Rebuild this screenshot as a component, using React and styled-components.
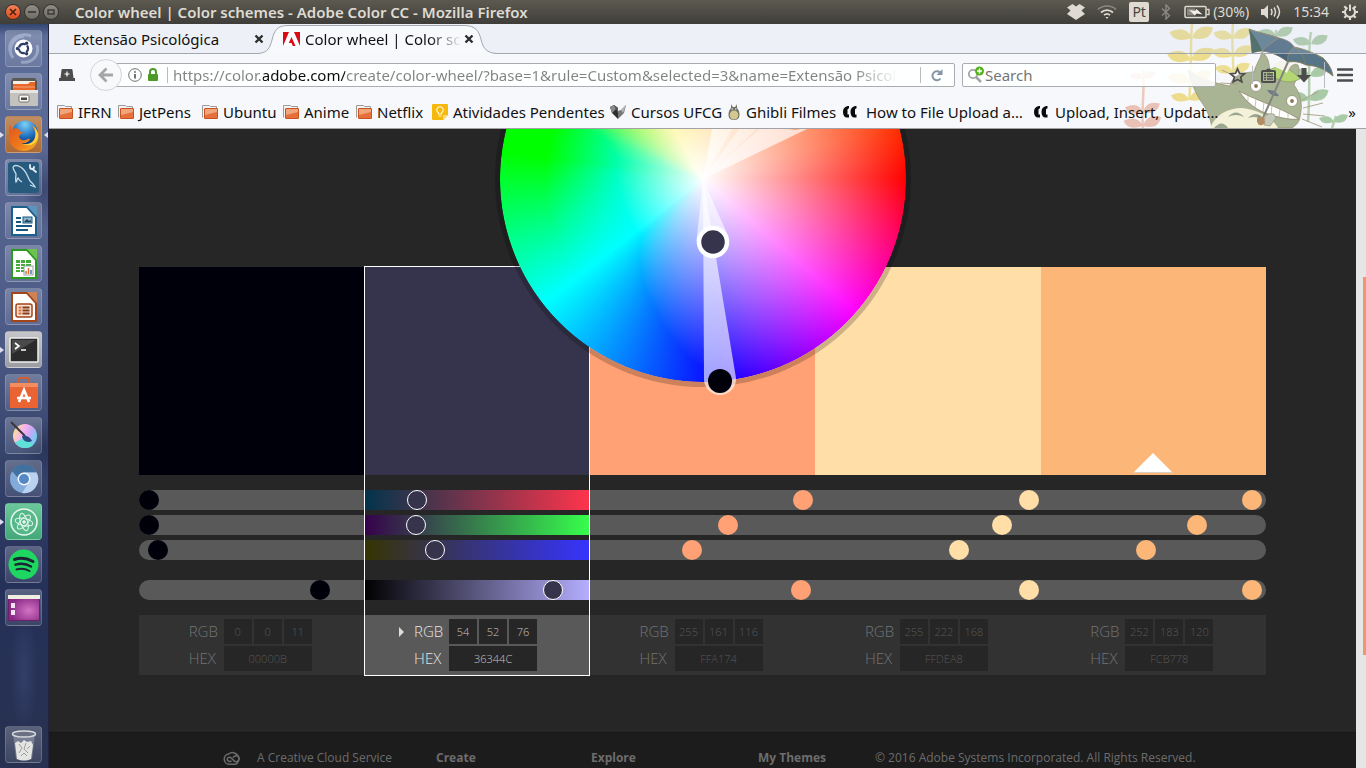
import React, { useLayoutEffect, useRef } from "react";
import styled, { createGlobalStyle, css } from "styled-components";

const chromeFont = '"Noto Sans", "Open Sans", sans-serif';
const pageFont = '"Open Sans", "Noto Sans", sans-serif';

const GlobalStyle = createGlobalStyle`
  * { box-sizing: border-box; }
  html, body { margin: 0; background: #262626; }
  body { font-family: ${chromeFont}; font-size: 15px; overflow: hidden; }
  button, input { font-family: inherit; }
  button { border: 0; padding: 0; background: none; cursor: pointer; }
  svg { display: block; flex: none; }
`;

/* ---------- desktop shell ---------- */

const Desktop = styled.div`
  display: flex;
  flex-direction: column;
  min-height: 100vh;
`;

const TitleBar = styled.header`
  display: flex;
  align-items: center;
  height: 24px;
  padding: 0 7px 0 5px;
  background: linear-gradient(#5c5a50, #3e3d39);
  color: #dfdbd2;
`;

const WindowButtons = styled.div`
  display: flex;
  gap: 3px;
  margin-right: 16px;
`;

const WindowButton = styled.button`
  display: grid;
  place-items: center;
  width: 16px;
  height: 16px;
  border-radius: 50%;
  border: 1px solid #33322e;
  background: ${(p) => (p.$close ? "linear-gradient(#f58259, #df4a1b)" : "linear-gradient(#8f8d84, #6e6c65)")};
`;

const WindowTitle = styled.h1`
  flex: 1;
  margin: 0;
  font-size: 15px;
  font-weight: 600;
  line-height: 24px;
  white-space: nowrap;
`;

const Indicators = styled.div`
  display: flex;
  align-items: center;
  gap: 12px;
  font-size: 14px;
  line-height: 24px;
`;

const IndicatorGroup = styled.div`
  display: flex;
  align-items: center;
  gap: 3px;
`;

const Layout = styled.span`
  width: 20px;
  height: 20px;
  border-radius: 2px;
  background: #dfdbd2;
  color: #45443f;
  font-size: 14px;
  line-height: 20px;
  text-align: center;
`;

const Workspace = styled.div`
  display: flex;
  flex: 1;
`;

const Launcher = styled.nav`
  display: flex;
  flex-direction: column;
  align-items: center;
  gap: 6px;
  width: 49px;
  padding: 6px 1px 5px 0;
  border-right: 1px solid #20233a;
  background:
    radial-gradient(ellipse 22px 40px at 44px 165px, #2f3a63aa, transparent),
    radial-gradient(ellipse 24px 30px at 44px 425px, #232c50aa, transparent),
    radial-gradient(ellipse 14px 60px at 24px 650px, #3d4c7a88, transparent),
    linear-gradient(#33466f 0, #5c6c98 12px, #5a6994 110px, #4c5a86 320px, #36446c 430px, #26315a 560px, #283150 100%);
`;

const Tile = styled.button`
  position: relative;
  display: grid;
  place-items: center;
  width: 37px;
  height: 37px;
  border-radius: 4px;
  border: 1px solid rgba(255, 255, 255, 0.16);
  background: ${(p) => p.$tint || "linear-gradient(rgba(255,255,255,.24), rgba(255,255,255,.1))"};
  ${(p) => p.$last && css`margin-top: auto;`}
`;

const RunningMark = styled.span`
  position: absolute;
  top: 15px;
  ${(p) => (p.$right ? "right: -7px; border-right: 4px solid #dde;" : "left: -6px; border-left: 4px solid #dde;")}
  border-top: 3px solid transparent;
  border-bottom: 3px solid transparent;
`;

/* ---------- browser chrome ---------- */

const Browser = styled.main`
  display: flex;
  flex-direction: column;
  flex: 1;
  min-width: 0;
`;

const Chrome = styled.div`
  position: relative;
  background: #f7f8fc;
  border-bottom: 1px solid #a2a2a6;
  color: #111;
`;

const Persona = styled.svg`
  position: absolute;
  top: 0;
  right: 0;
`;

const TabStrip = styled.div`
  position: relative;
  display: flex;
  height: 30px;
  background: rgba(205, 212, 228, 0.2);
  border-bottom: 1px solid #a3a8af;
`;

const Tab = styled.div`
  position: relative;
  display: flex;
  align-items: center;
  width: ${(p) => p.$width}px;
  height: 30px;
  padding: ${(p) => p.$pad};
  margin-left: ${(p) => (p.$active ? -6 : 0)}px;
  line-height: 30px;
`;

const TabShape = styled.svg`
  position: absolute;
  inset: 0;
  width: 100%;
  height: 30px;
`;

const TabTitle = styled.span`
  position: relative;
  flex: 1;
  min-width: 0;
  margin-left: ${(p) => (p.$icon ? 5 : 0)}px;
  white-space: nowrap;
  ${(p) => p.$icon && css`mask-image: linear-gradient(to right, #000 124px, transparent 157px);`}
`;

const TabClose = styled.button`
  position: relative;
  width: 10px;
  height: 10px;
`;

const NavBar = styled.div`
  position: relative;
  display: flex;
  align-items: center;
  height: 42px;
  padding: 0 11px 0 10px;
`;

const BackButton = styled.button`
  position: relative;
  z-index: 1;
  display: grid;
  place-items: center;
  flex: none;
  width: 32px;
  height: 32px;
  margin-left: 15px;
  border: 1px solid #d3d5d9;
  border-radius: 50%;
  background: #f8f9fb;
`;

const Field = styled.label`
  display: flex;
  align-items: center;
  height: 24px;
  border: 1px solid #a9acb1;
  border-radius: 2px;
  background: rgba(255, 255, 255, 0.88);
`;

const AddressField = styled(Field)`
  flex: 1;
  margin-left: -8px;
  padding: 0 7px 0 13px;
`;

const SearchField = styled(Field)`
  width: 254px;
  margin-left: 7px;
  padding-left: 4px;
`;

const FieldRule = styled.span`
  width: 1px;
  height: ${(p) => p.$tall || 16}px;
  margin: 0 ${(p) => p.$gap}px;
  background: #b9bbc0;
`;

const AddressInput = styled.input`
  flex: 1;
  min-width: 0;
  height: 22px;
  padding: 0;
  border: 0;
  outline: 0;
  font-size: 15px;
  color: transparent;
  background: linear-gradient(to right, #828282 90px, #0c0c0c 90px, #0c0c0c 172px, #828282 172px, #828282 calc(100% - 60px), transparent calc(100% - 16px));
  background-clip: text;
  -webkit-background-clip: text;
`;

const SearchInput = styled.input`
  flex: 1;
  min-width: 0;
  height: 22px;
  padding: 0;
  border: 0;
  outline: 0;
  background: none;
  font-size: 15px;
  &::placeholder { color: #757575; opacity: 1; }
`;

const ToolButton = styled.button`
  display: grid;
  place-items: center;
  width: 20px;
  height: 24px;
  margin-left: ${(p) => p.$gap || 0}px;
`;

const Bookmarks = styled.nav`
  position: relative;
  display: flex;
  align-items: center;
  height: 32px;
  padding: 0 10px 0 8px;
`;

const Bookmark = styled.a`
  display: flex;
  align-items: center;
  gap: ${(p) => p.$gap || 5}px;
  width: ${(p) => p.$width}px;
  color: #111;
  text-decoration: none;
  white-space: nowrap;
  line-height: 20px;
`;

const More = styled.button`
  margin-left: auto;
  font-size: 15px;
  line-height: 20px;
  color: #111;
`;

/* ---------- page ---------- */

const PageArea = styled.div`
  display: flex;
  flex: 1;
`;

const Page = styled.div`
  position: relative;
  display: flex;
  flex-direction: column;
  flex: 1;
  min-width: 0;
  overflow: hidden;
  background: #262626;
  font-family: ${pageFont};
`;

const ScrollTrack = styled.div`
  display: flex;
  justify-content: flex-end;
  width: 10px;
  padding-top: 148px;
  background: #e6e6e6;
`;

const ScrollThumb = styled.div`
  width: 3px;
  height: 378px;
  background: #f2956d;
`;

const WheelBox = styled.div`
  position: absolute;
  z-index: 2;
  top: -158px;
  left: 50%;
  width: 416px;
  height: 430px;
  margin-left: -208px;
`;

const WheelDisc = styled.canvas`
  display: block;
  width: 416px;
  height: 416px;
  border: 5px solid rgba(0, 0, 0, 0.2);
  border-radius: 50%;
`;

const WheelMarks = styled.svg`
  position: absolute;
  inset: 0;
`;

const Palette = styled.section`
  display: flex;
  margin: 138px 90px 57px;
`;

const Column = styled.div`
  position: relative;
  flex: 1;
  min-width: 0;
  ${(p) =>
    p.$selected &&
    css`
      &::after {
        content: "";
        position: absolute;
        inset: -1px 0;
        border: 1px solid #fff;
        pointer-events: none;
      }
    `}
`;

const Swatch = styled.div`
  display: flex;
  justify-content: center;
  align-items: flex-end;
  height: 208px;
  padding-bottom: 2px;
  background: ${(p) => p.$color};
`;

const Sliders = styled.div`
  display: flex;
  flex-direction: column;
  gap: 5px;
  padding: 15px 0;
`;

const Track = styled.div`
  height: 20px;
  margin-top: ${(p) => (p.$apart ? 15 : 0)}px;
  padding-right: 2px;
  background: ${(p) => p.$fill || "#595959"};
  border-radius: ${(p) => (p.$end === "first" ? "10px 0 0 10px" : p.$end === "last" ? "0 10px 10px 0" : "0")};
`;

const Range = styled.input`
  appearance: none;
  display: block;
  width: 100%;
  height: 20px;
  margin: 0;
  background: none;
  &::-webkit-slider-thumb {
    appearance: none;
    box-sizing: border-box;
    width: 20px;
    height: 20px;
    border: ${(p) => (p.$selected ? "1px solid #fff" : "0")};
    border-radius: 50%;
    background: ${(p) => p.$color};
  }
`;

const Values = styled.div`
  display: grid;
  grid-template-columns: 35px 88px;
  grid-auto-rows: 25px;
  row-gap: 2px;
  justify-content: center;
  align-items: center;
  height: 60px;
  padding: 4px 3px 4px 0;
  background: ${(p) => (p.$selected ? "#595959" : "#323232")};
  color: ${(p) => (p.$selected ? "#e4e4e4" : "#747474")};
`;

const ModeLabel = styled.span`
  position: relative;
  font-size: 15px;
  font-weight: 300;
  line-height: 25px;
`;

const ModeArrow = styled.span`
  position: absolute;
  left: -15px;
  top: 8px;
  border-left: 5px solid #dedede;
  border-top: 5px solid transparent;
  border-bottom: 5px solid transparent;
`;

const ValueRow = styled.div`
  display: flex;
  gap: 2px;
`;

const ValueInput = styled.input`
  flex: 1;
  width: 0;
  height: 25px;
  padding: 0;
  border: 0;
  background: #262626;
  color: ${(p) => (p.$selected ? "#c4c4c4" : "#585858")};
  font-size: 11px;
  font-weight: 300;
  text-align: center;
`;

const Footer = styled.footer`
  display: flex;
  flex: 1;
  align-items: flex-start;
  padding: 15px 0 0 174px;
  border-top: 1px solid #171717;
  background: #1c1c1c;
  color: #6c6c6c;
  font-size: 12px;
  line-height: 20px;
  white-space: nowrap;
`;

const FooterCell = styled.div`
  display: flex;
  align-items: center;
  gap: 14px;
  width: ${(p) => p.$width}px;
`;

const FooterLink = styled.a`
  color: inherit;
  font-weight: 700;
  text-decoration: none;
`;

/* ---------- launcher icons ---------- */

const DocIcon = ({ color, fold, children }) => (
  <svg width="28" height="32" viewBox="0 0 28 32">
    <path d="M2 2h15l9 10v18H2z" fill="#fff" stroke={color} strokeWidth="2" />
    <path d="M17 1h10v11z" fill={fold} />
    {children}
  </svg>
);

const launcherApps = [
  {
    name: "Dash",
    icon: (
      <svg width="35" height="35" viewBox="0 0 35 35">
        <path d="M4 20C2 8 14 1 25 5M31 14c3 10-5 19-16 17M7 27C0 17 8 6 18 5" fill="none" stroke="#c9d2ea" strokeOpacity=".45" strokeWidth="3" />
        <circle cx="17.500" cy="17.500" r="9" fill="#fff" />
        <circle cx="17.500" cy="17.500" r="4.600" fill="none" stroke="#2f3d66" strokeWidth="2.200" strokeDasharray="8.200 1.430" strokeDashoffset="4" />
        <circle cx="11.500" cy="17.500" r="1.700" fill="#2f3d66" />
        <circle cx="20.600" cy="12.300" r="1.700" fill="#2f3d66" />
        <circle cx="20.600" cy="22.700" r="1.700" fill="#2f3d66" />
      </svg>
    ),
  },
  {
    name: "Files",
    icon: (
      <svg width="30" height="31" viewBox="0 0 30 31">
        <path d="M4 2h22l2 3v10H2V5z" fill="#5b5954" />
        <path d="M4 5h22v8H4z" fill="#f3efe8" />
        <path d="M4 8h15l2-2h5v8H4z" fill="#e8672a" />
        <path d="M4 11h22" stroke="#f7a77b" />
        <path d="M1 14h28v15q0 1-1 1H2q-1 0-1-1z" fill="#c4c2be" />
        <path d="M1 14h28v3H1z" fill="#e8e6e3" />
        <rect x="10" y="19" width="10" height="7" rx="1.500" fill="#f7f7f7" stroke="#77746f" />
        <rect x="12" y="21.500" width="6" height="2.500" fill="#4a4844" />
      </svg>
    ),
  },
  {
    name: "Firefox",
    tint: "linear-gradient(#c08d62, #ad6a35)",
    left: true,
    right: true,
    icon: (
      <svg width="32" height="32" viewBox="0 0 32 32">
        <defs>
          <radialGradient id="ffGlobe" cx=".5" cy=".15" r=".8">
            <stop offset="0" stopColor="#7fd0f5" />
            <stop offset=".6" stopColor="#1f6fc0" />
            <stop offset="1" stopColor="#0d2f6e" />
          </radialGradient>
          <linearGradient id="ffFox" x1="0" y1="0" x2="1" y2="1">
            <stop offset="0" stopColor="#e2541b" />
            <stop offset=".55" stopColor="#ee7a1b" />
            <stop offset="1" stopColor="#f9b52a" />
          </linearGradient>
        </defs>
        <circle cx="17" cy="14.500" r="13" fill="url(#ffGlobe)" />
        <path d="M3 6c0 3 0 4 1 5 2-2 4-2 7-1-1 2 1 3 4 3-1 2-3 2-4 4 0 3 3 5 6 4 2 0 3-2 5-1-1 3-5 5-9 4 5 3 13 1 14-6 1-5-1-9-4-12 5 3 8 8 7 14-1 7-7 12-14 12C8 32 1 26 1 18 1 13 1 9 3 6z" fill="url(#ffFox)" />
        <path d="M24 6c4 4 5 10 2 15-3 4-8 5-12 4 6 3 14 1 16-6 1-5-1-9-6-13z" fill="#fbd33a" />
      </svg>
    ),
  },
  {
    name: "MySQL Workbench",
    icon: (
      <svg width="31" height="31" viewBox="0 0 31 31">
        <rect width="31" height="31" rx="3" fill="#285a7e" />
        <path d="M5 5c2-3 8-1 11 3 3 3 4 8 6 11 2 2 4 3 5 6l-5-2M5 5c0 3 2 4 3 7 0 3-1 5 0 8 1-1 1-3 2-4 1 2 2 3 4 4" fill="none" stroke="#c8dce9" strokeWidth="1.300" />
        <path d="M22 3v2q0 2 2 2t2-2M24.500 7l3.500 3" fill="none" stroke="#e6eef4" strokeWidth="1.800" strokeLinecap="round" />
      </svg>
    ),
  },
  {
    name: "Writer",
    icon: (
      <DocIcon color="#1b5f8c" fold="#5c93bb">
        <path d="M6 13h5M6 17h5M6 21h16M6 25h12" stroke="#175781" strokeWidth="2" />
        <rect x="13" y="12" width="9" height="6" fill="#8cb5d0" stroke="#175781" />
        <path d="M14 17l3-3 2 2 2-1v2z" fill="#21425a" />
      </DocIcon>
    ),
  },
  {
    name: "Calc",
    icon: (
      <DocIcon color="#2b9a1f" fold="#6fc14f">
        <path d="M6 12h15v12H6z" fill="#45ab37" />
        <path d="M6 15.500h15M6 18.500h15M6 21.500h15M10.500 12v12M15.500 12v12" stroke="#fff" />
        <rect x="14" y="18" width="9" height="9" fill="#fff" stroke="#98a2a8" />
        <path d="M16 26v-3M18.500 26v-6" stroke="#e06c2f" strokeWidth="1.500" />
        <path d="M21 26v-4" stroke="#3d7ab5" strokeWidth="1.500" />
      </DocIcon>
    ),
  },
  {
    name: "Impress",
    icon: (
      <DocIcon color="#a2461a" fold="#cf8256">
        <rect x="6" y="13" width="16" height="13" rx="2" fill="#f6e2d6" stroke="#a2461a" strokeWidth="1.500" />
        <path d="M8.500 16.500h3M8.500 19.500h3M8.500 22.500h3" stroke="#e1702f" strokeWidth="2" />
        <path d="M12.500 16.500h7M12.500 19.500h7M12.500 22.500h7" stroke="#893a13" strokeWidth="2" />
      </DocIcon>
    ),
  },
  {
    name: "Terminal",
    tint: "linear-gradient(#c4c6cc, #9b9da3)",
    left: true,
    icon: (
      <svg width="30" height="26" viewBox="0 0 30 26">
        <rect x="1" y="1" width="28" height="24" rx="1" fill="#2b2b2b" stroke="#efefef" strokeWidth="1.500" />
        <path d="M3 3h24L3 17z" fill="#4a4a4a" />
        <path d="M6 6l4 3-4 3M12 13h5" fill="none" stroke="#fff" strokeWidth="1.600" />
      </svg>
    ),
  },
  {
    name: "Software",
    icon: (
      <svg width="30" height="32" viewBox="0 0 30 32">
        <path d="M10 8V3q0-2 2-2h6q2 0 2 2v5" fill="none" stroke="#d65a2d" strokeWidth="2" />
        <path d="M1 6h28v25H1z" fill="#ea6433" />
        <path d="M1 6h28v4H1z" fill="#f58d62" />
        <path d="M10 25l5-12 5 12M8 21h14" fill="none" stroke="#fff" strokeWidth="2.600" />
      </svg>
    ),
  },
  {
    name: "Krita",
    icon: (
      <svg width="34" height="33" viewBox="0 0 34 33">
        <defs>
          <linearGradient id="kr" x1="0" y1=".3" x2="1" y2=".7">
            <stop offset="0" stopColor="#f7e38a" />
            <stop offset=".35" stopColor="#f9b4ee" />
            <stop offset=".65" stopColor="#c9a8f6" />
            <stop offset="1" stopColor="#58d6f0" />
          </linearGradient>
        </defs>
        <circle cx="18" cy="17" r="12" fill="url(#kr)" />
        <path d="M8 23.500a12 12 0 0018.500 2.200L18 18z" fill="#5fe0d8" />
        <path d="M4 3l14 14" stroke="#38353d" strokeWidth="2" />
        <path d="M15 17c3-1 8 0 10 5-4 2-9 1-10-5z" fill="#294b86" />
      </svg>
    ),
  },
  {
    name: "Chromium",
    icon: (
      <svg width="30" height="30" viewBox="0 0 30 30">
        <circle cx="15" cy="15" r="14" fill="#82abdc" />
        <path d="M3 7a14 14 0 0124.500 1.500H15a7 7 0 00-6.500 5z" fill="#41719f" />
        <path d="M27.500 8.500A14 14 0 0113 29l7-11c1-4-1-8-5-9.500z" fill="#b8d2f0" />
        <circle cx="15" cy="15" r="6.500" fill="#f2f6fb" />
        <circle cx="15" cy="15" r="5" fill="#5588c4" />
      </svg>
    ),
  },
  {
    name: "Atom",
    tint: "linear-gradient(#6cc79b, #43a878)",
    left: true,
    icon: (
      <svg width="30" height="30" viewBox="0 0 30 30" fill="none" stroke="#e4f7ed">
        <circle cx="15" cy="15" r="13" strokeWidth="1.600" fill="#56b889" />
        <ellipse cx="15" cy="15" rx="9" ry="3.500" transform="rotate(12 15 15)" />
        <ellipse cx="15" cy="15" rx="9" ry="3.500" transform="rotate(72 15 15)" />
        <ellipse cx="15" cy="15" rx="9" ry="3.500" transform="rotate(132 15 15)" />
        <circle cx="15" cy="15" r="1.300" fill="#e4f7ed" />
      </svg>
    ),
  },
  {
    name: "Spotify",
    icon: (
      <svg width="31" height="31" viewBox="0 0 31 31" fill="none" stroke="#1c2433" strokeLinecap="round">
        <circle cx="15.500" cy="15.500" r="15" fill="#1ed760" stroke="none" />
        <path d="M6.500 10.500c6-2 13-1 18.500 2" strokeWidth="3" />
        <path d="M7.500 15.700c5-1.500 11-1 15.500 1.800" strokeWidth="2.400" />
        <path d="M8.500 20.400c4-1.200 9-.8 13 1.600" strokeWidth="2" />
      </svg>
    ),
  },
  {
    name: "Display switcher",
    icon: (
      <svg width="32" height="26" viewBox="0 0 32 26">
        <defs>
          <radialGradient id="dsp" cx=".65" cy=".6" r=".6">
            <stop offset="0" stopColor="#d273c4" />
            <stop offset="1" stopColor="#8a2a86" />
          </radialGradient>
        </defs>
        <rect x=".5" y=".5" width="31" height="25" fill="url(#dsp)" stroke="#6b1f69" />
        <path d="M0 0h32v4H0z" fill="#f0eee0" />
        <path d="M3 8h4v5H3zM3 15h4v5H3z" fill="#f2e4f2" />
      </svg>
    ),
  },
];

const TrashIcon = () => (
  <svg width="26" height="32" viewBox="0 0 26 32">
    <path d="M2 5l3 25q8 3 16 0l3-25z" fill="#c8ccd4" fillOpacity=".35" />
    <path d="M4 14l3-2 3 2 3-3 3 2 4-1 2 4-2 14q-7 3-14 0z" fill="#e4e4e2" />
    <path d="M8 15l3 4-3 5M15 14l-2 6 4 4M19 17l-3 3M10 27l3-3 3 3" fill="none" stroke="#9d9d9d" />
    <ellipse cx="13" cy="5" rx="11.500" ry="3" fill="#6b7180" stroke="#d8dade" strokeWidth="1.500" />
  </svg>
);

/* ---------- small browser icons ---------- */

const FolderIcon = () => (
  <svg width="16" height="16" viewBox="0 0 16 16">
    <path d="M.5 13.500V1.500h7l1 1h6v2" fill="#f4f4f4" stroke="#9b9b9b" />
    <rect x="2.500" y="4.500" width="13" height="10" rx=".5" fill="#e5703c" stroke="#c9511f" />
    <path d="M3 5h12v3L3 11z" fill="#f0a67a" />
  </svg>
);

const KeepIcon = () => (
  <svg width="16" height="16" viewBox="0 0 16 16">
    <path d="M1 0h14q1 0 1 1v10l-5 5H1q-1 0-1-1V1q0-1 1-1z" fill="#f4b90a" />
    <path d="M11 16v-5h5z" fill="#fbdc7d" />
    <path d="M6.500 10V8.800a3.200 3.200 0 113 0V10zM6.500 12h3" fill="none" stroke="#fff3cf" strokeWidth="1.200" />
  </svg>
);

const WingIcon = () => (
  <svg width="16" height="16" viewBox="0 0 16 16">
    <path d="M0 3l4-2 4 3v11L2 9z" fill="#2f2f2f" />
    <path d="M0 3l4-2 2 4-4 4z" fill="#8a8a8a" />
    <path d="M4 1l4 3v5z" fill="#5a5a5a" />
    <path d="M8 7l3-1 5-5-2 8-6 6z" fill="#777" />
    <path d="M16 1l-5 5 2 3z" fill="#b5b5b5" />
  </svg>
);

const GhibliIcon = () => (
  <svg width="14" height="16" viewBox="0 0 14 16">
    <path d="M4.500 0l1.200 3h2.600l1.200-3 .7 4.300C11.800 6 12.500 8.500 12.500 11c0 3.300-2 5-5.500 5s-5.500-1.700-5.500-5c0-2.500.7-5 2.300-6.700z" fill="#6f7168" />
    <ellipse cx="7" cy="11" rx="4.300" ry="4.500" fill="#d3c88f" />
    <path d="M4.500 5h1.500M8 5h1.500" stroke="#fff" />
  </svg>
);

const QuoteIcon = () => (
  <svg width="16" height="12" viewBox="0 0 16 12">
    <path d="M7 0C3 0 1 2.500 1 6c0 3.500 1.500 5.500 4 5.500h2V8.500H5.500V4C5.500 3 6 2.500 7 2.500zM14.500 0c-4 0-6 2.500-6 6 0 3.500 1.500 5.500 4 5.500h2V8.500H13V4c0-1 .5-1.500 1.500-1.500z" fill="#0b0b0b" />
  </svg>
);

const AdobeIcon = () => (
  <svg width="17" height="14" viewBox="0 0 17 14">
    <path d="M0 0h17v14H0z" fill="#fff" />
    <path d="M0 0h6L0 14zM11 0h6v14zM8.500 5l4 9H9.800l-1.200-3H5.800z" fill="#d80b17" />
  </svg>
);

const FaviconSlot = styled.span`
  position: relative;
`;

const CloseGlyph = () => (
  <svg width="10" height="10" viewBox="0 0 10 10">
    <path d="M1.500 1.500l7 7M8.500 1.500l-7 7" stroke="#2e2e2e" strokeWidth="2.400" />
  </svg>
);

const CloudIcon = () => (
  <svg width="20" height="16" viewBox="0 0 20 16" fill="none" stroke="#6c6c6c" strokeWidth="1.500">
    <path d="M7 14.300A5.200 5.200 0 015.600 4 6.200 6.200 0 1113.500 13.800q-1 .5-2.500.5z" />
    <path d="M8.500 11c-2 1.200-4.300.2-4.300-1.700 0-2 2.600-2.800 4.300-1l2.600 2.600c1.800 1.700 5 .5 5-2.300S13 4.800 11 6.500L9.800 7.700" />
  </svg>
);

/* ---------- browser theme illustration ---------- */

const leafPair = (x, y, s, color) => (
  <g key={`${x}-${y}`} fill={color}>
    <path d={`M${x} ${y}q${-s * 0.4} ${-s * 0.9} ${-s * 1.5} ${-s * 0.4}q${s * 0.3} ${s * 0.8} ${s * 1.5} ${s * 0.4}z`} />
    <path d={`M${x} ${y}q${s * 0.3} ${-s} ${s * 1.4} ${-s * 0.7}q${-s * 0.2} ${s} ${-s * 1.4} ${s * 0.7}z`} />
  </g>
);

const ThemeArt = () => (
  <Persona width="246" height="104" viewBox="0 0 246 104" aria-hidden="true">
    <g fill="none" strokeWidth="2.500">
      <path d="M72 0c-2 20 0 50-3 76" stroke="#ecdf98" />
      <path d="M113 0c-2 20 1 30 0 50" stroke="#e8e1a0" />
      <path d="M23 46c2 20-2 40 0 58" stroke="#ebc9bd" />
      <path d="M156 6c0 12 2 14 4 24M191 8c-4 20 0 50-3 90M216 92l-4 12" stroke="#b5d0ae" />
    </g>
    {[[72, 14, 15], [71, 36, 16], [70, 58, 15], [69, 76, 12]].map(([x, y, s]) => leafPair(x, y, s, "#ecdc8c"))}
    {[[113, 14, 13], [113, 32, 14], [113, 48, 12]].map(([x, y, s]) => leafPair(x, y, s, "#ecdf93"))}
    {[[23, 54, 9], [23, 88, 12], [23, 102, 13]].map(([x, y, s]) => leafPair(x, y, s, "#e9c2b5"))}
    {[[156, 12, 12], [191, 20, 12], [190, 52, 13], [189, 76, 14], [214, 98, 10]].map(([x, y, s]) => leafPair(x, y, s, "#a9caa6"))}
    <path d="M68 46c4 3 6 2 8 6 10 3 20 8 34 10 2-10 12-14 24-14 2-8 6-12 8-20 7 5 7 13 8 18 4 1 9 3 14 6 4-8 10-14 14-11 3 8-2 14-4 20 7 9 9 20 6 32-1 6-4 8-8 11H92c-2-12-6-20-12-28-6-10-9-18-12-30z" fill="#a9b495" stroke="#968d6f" strokeWidth=".7" />
    <path d="M90 104c6-14 18-20 32-20 18 2 30 10 36 20z" fill="#f3f1d8" />
    <path d="M108 93q8-9 16 0-8-4-16 0zM128 94q9-9 17 2-9-5-17-2zM94 104q8-9 14 0z" fill="#9aa690" />
    <path d="M148 47c10-8 24-2 32 8-12 6-24 2-32-8z" fill="#b4d673" stroke="#7f9660" strokeWidth=".6" />
    <path d="M152 42c8-8 16-6 19-1l-4 8c-4-3-9-5-15-7z" fill="#f5f4ec" />
    <circle cx="136" cy="62" r="5.500" fill="#fff" stroke="#8d8466" strokeWidth=".7" />
    <circle cx="136" cy="62" r="1.900" fill="#8c7653" />
    <circle cx="172" cy="77" r="5.500" fill="#fff" stroke="#8d8466" strokeWidth=".7" />
    <circle cx="172" cy="77" r="1.900" fill="#8c7653" />
    <path d="M147 66q8-1 12 6-8 1-12-6z" fill="#6f7a8a" />
    <path d="M119 67c16 9 38 15 60 28-8 1-18-1-28-4-14-4-24-12-32-24z" fill="#fff" stroke="#8d8466" strokeWidth=".8" />
    <path d="M128 72v5M136 75l-1 9M144 78l-1 10M152 81l-1 10M160 85l-1 8M168 89v5" stroke="#b3ab8e" strokeWidth=".7" />
    <path d="M183 84l20-5M183 90l22 2M182 95l20 8M182 76l16-8M122 56l-20-10M118 60l-18-1" stroke="#a89d80" strokeWidth=".9" />
    <path d="M168 38l-26 58q-6 6-3-4" fill="none" stroke="#84847e" strokeWidth="2" />
    <path d="M129 5c10 4 20 5 30 9 8 2 12 4 15 9 10 2 18 5 29 11 5 5 9 11 10 18-10-8-16-10-27-11-6-3-10-4-18-3-8-6-16-10-26-11-4 0-7 1-10 2-1-9-1-16-3-24z" fill="#567688" stroke="#8c7d58" strokeWidth="1" />
    <path d="M129 5c6 8 10 14 13 22-4 0-7 1-10 2-1-9-1-16-3-24z" fill="#355a52" />
    <path d="M142 27c6-6 12-8 16-13 8 2 12 4 16 9-6 6-8 8-6 15-8-6-16-10-26-11z" fill="#42607a" opacity=".7" />
    <path d="M159 14c-6 4-12 7-17 13M174 23c-5 5-7 9-6 15M174 23c6 4 10 10 12 18" fill="none" stroke="#8c7d58" strokeWidth=".9" />
    <path d="M144 96q2-8 10-6l2 4-6 8-6-1z" fill="#c2c9ba" stroke="#968d6f" strokeWidth=".6" />
    <path d="M138 92q4 4 6 0l1 7q-4 4-7 1z" fill="#b08d63" />
  </Persona>
);

/* ---------- color wheel ---------- */

const wheelRadius = 203;

// Hue ring, clockwise degrees from three o'clock.
const hueStops = [
  [0, 255, 0, 0],
  [41, 255, 0, 255],
  [85, 10, 0, 255],
  [142, 0, 255, 255],
  [188, 0, 255, 0],
  [202, 0, 255, 0],
  [240, 255, 232, 0],
  [300, 255, 128, 0],
  [345, 255, 48, 0],
  [360, 255, 0, 0],
];

// Radius at which each direction becomes fully saturated.
const saturationStops = [
  [0, 203],
  [85, 203],
  [109, 142],
  [137, 84],
  [165, 84],
  [194, 88],
  [205, 113],
  [240, 203],
  [360, 203],
];

// Extra blue that turns the inner greens towards spring green.
const innerBlueStops = [
  [0, 0],
  [142, 0],
  [165, 260],
  [185, 490],
  [205, 500],
  [232, 0],
  [360, 0],
];

const sample = (stops, angle) => {
  let i = 1;
  while (stops[i][0] < angle) i += 1;
  const a = stops[i - 1];
  const b = stops[i];
  const t = (angle - a[0]) / (b[0] - a[0]);
  return a.slice(1).map((v, k) => v + (b[k + 1] - v) * t);
};

function ColorWheel() {
  const ref = useRef(null);
  useLayoutEffect(() => {
    const size = wheelRadius * 2;
    const ctx = ref.current.getContext("2d");
    const img = ctx.createImageData(size, size);
    for (let y = 0; y < size; y += 1) {
      for (let x = 0; x < size; x += 1) {
        const dx = x + 0.5 - wheelRadius;
        const dy = y + 0.5 - wheelRadius;
        const angle = ((Math.atan2(dy, dx) * 180) / Math.PI + 360) % 360;
        const hue = sample(hueStops, angle);
        const r = Math.hypot(dx, dy);
        const full = sample(saturationStops, angle)[0];
        const inner = Math.max(0, 0.78 - Math.max(r, full) / wheelRadius);
        hue[2] = Math.min(255, hue[2] + inner * sample(innerBlueStops, angle)[0]);
        const sat = Math.min(1, r / full);
        const at = (y * size + x) * 4;
        for (let k = 0; k < 3; k += 1) img.data[at + k] = 255 + (hue[k] - 255) * sat;
        img.data[at + 3] = 255 * Math.max(0, Math.min(1, wheelRadius - r + 0.5));
      }
    }
    ctx.putImageData(img, 0, 0);
  }, []);

  return (
    <WheelBox>
      <WheelDisc ref={ref} width={wheelRadius * 2} height={wheelRadius * 2} />
      <WheelMarks width="416" height="430" viewBox="0 0 416 430">
        <g fill="#fff">
          <path d="M208 208L217 158h20zM208 208L244 158h18z" opacity=".45" />
          <path d="M208 208L264 158h48z" opacity=".5" />
          <path d="M208 208L217 158h95z" opacity=".35" />
          <path d="M208 208L201.500 270l32-4z" opacity=".6" />
          <path d="M208 208l1 201a16 16 0 0032-2z" opacity=".62" />
        </g>
        <circle cx="300" cy="147" r="12" fill="#ffa174" />
        <circle cx="225" cy="410" r="12" fill="#00000b" />
        <circle cx="218" cy="271" r="14" fill="#36344c" stroke="#fff" strokeWidth="4.500" />
      </WheelMarks>
    </WheelBox>
  );
}

/* ---------- data ---------- */

const colors = [
  { hex: "00000B", rgb: [0, 0, 11], level: 84 },
  { hex: "36344C", rgb: [54, 52, 76], level: 88, selected: true },
  { hex: "FFA174", rgb: [255, 161, 116], level: 99 },
  { hex: "FFDEA8", rgb: [255, 222, 168], level: 100 },
  { hex: "FCB778", rgb: [252, 183, 120], level: 99, base: true },
];

const selectedFills = [
  "linear-gradient(to right, #00344c, #ff344c)",
  "linear-gradient(to right, #36004c, #36ff4c)",
  "linear-gradient(to right, #363400, #3634ff)",
  "linear-gradient(to right, #000, #b5aeff)",
];

const channels = ["Red", "Green", "Blue", "Brightness"];

const bookmarks = [
  { label: "IFRN", width: 61, icon: <FolderIcon /> },
  { label: "JetPens", width: 84, icon: <FolderIcon /> },
  { label: "Ubuntu", width: 81, icon: <FolderIcon /> },
  { label: "Anime", width: 73, icon: <FolderIcon /> },
  { label: "Netflix", width: 76, icon: <FolderIcon /> },
  { label: "Atividades Pendentes", width: 178, icon: <KeepIcon /> },
  { label: "Cursos UFCG", width: 117, icon: <WingIcon /> },
  { label: "Ghibli Filmes", width: 115, icon: <GhibliIcon /> },
  { label: "How to File Upload a…", width: 191, gap: 8, icon: <QuoteIcon /> },
  { label: "Upload, Insert, Updat…", width: 190, gap: 6, icon: <QuoteIcon /> },
];

function ColorColumn({ color, index }) {
  const { hex, rgb, level, selected, base } = color;
  const end = index === 0 ? "first" : index === colors.length - 1 ? "last" : undefined;
  const settings = [...rgb, level];
  return (
    <Column $selected={selected}>
      <Swatch $color={`#${hex}`}>
        {base && (
          <svg width="40" height="20" viewBox="0 0 40 20">
            <path d="M20 0l19.500 19.500H.5z" fill="#fff" />
            <path d="M0 19.500h40" stroke="#d8cfc5" />
          </svg>
        )}
      </Swatch>
      <Sliders>
        {channels.map((channel, i) => (
          <Track key={channel} $apart={i === 3} $end={end} $fill={selected && selectedFills[i]}>
            <Range
              type="range"
              min="0"
              max={i === 3 ? 100 : 255}
              defaultValue={settings[i]}
              aria-label={`${channel} of #${hex}`}
              $color={`#${hex}`}
              $selected={selected}
            />
          </Track>
        ))}
      </Sliders>
      <Values $selected={selected}>
        <ModeLabel>
          {selected && <ModeArrow />}
          RGB
        </ModeLabel>
        <ValueRow>
          {rgb.map((v, i) => (
            <ValueInput key={channels[i]} $selected={selected} defaultValue={v} aria-label={`${channels[i]} value`} />
          ))}
        </ValueRow>
        <ModeLabel as="label" htmlFor={`hex-${hex}`}>HEX</ModeLabel>
        <ValueRow>
          <ValueInput id={`hex-${hex}`} $selected={selected} defaultValue={hex} />
        </ValueRow>
      </Values>
    </Column>
  );
}

function SystemIndicators() {
  return (
    <Indicators>
      <svg width="18" height="16" viewBox="0 0 18 16" fill="#dfdbd2">
        <path d="M5.500 0L9 2.600 12.500 0 18 3.600l-3.600 3L18 10l-3.800 2.400L9 16l-5.200-3.600L0 10l3.600-3.400L0 3.600z" />
      </svg>
      <svg width="20" height="14" viewBox="0 0 20 14" fill="none" strokeWidth="1.700">
        <path d="M1 4.500C6-.2 14-.2 19 4.500" stroke="#8b8982" />
        <path d="M4 7.500c3.500-3.200 8.500-3.200 12 0M7 10.200c1.800-1.600 4.200-1.600 6 0" stroke="#dfdbd2" />
        <path d="M8.500 12l1.500 2 1.500-2z" fill="#dfdbd2" />
      </svg>
      <Layout>Pt</Layout>
      <svg width="11" height="16" viewBox="0 0 11 16" fill="none" stroke="#8b8982" strokeWidth="1.400">
        <path d="M1 4.500l7.500 7L5 15V1l3.500 3.500-7.500 7" />
      </svg>
      <IndicatorGroup>
        <svg width="26" height="14" viewBox="0 0 26 14">
          <rect x="1" y="1.500" width="21" height="11" rx="1" fill="none" stroke="#dfdbd2" strokeWidth="1.500" />
          <path d="M23 4.500h2v5h-2" fill="none" stroke="#dfdbd2" strokeWidth="1.300" />
          <path d="M3 3.500h8v7H3z" fill="#8b8982" />
          <path d="M5 5l6 1 1.500-2 6 5.500-6-1L11 10.500z" fill="#f3f0e8" />
        </svg>
        <span>(30%)</span>
      </IndicatorGroup>
      <svg width="20" height="16" viewBox="0 0 20 16" fill="none" stroke="#dfdbd2" strokeWidth="1.500">
        <path d="M0 5h3l4-4v14l-4-4H0z" fill="#dfdbd2" stroke="none" />
        <path d="M10 5q2 3 0 6M13 3.500q3 4.500 0 9M16 1.500q5 6.500 0 13" />
      </svg>
      <time>15:34</time>
      <svg width="18" height="18" viewBox="0 0 18 18" fill="none" stroke="#dfdbd2">
        <path d="M6.500 4.700a5 5 0 105 0" strokeWidth="2" />
        <path d="M9 1.500V8" strokeWidth="2" />
        <path d="M1 9h3M14 9h3M3.300 3.300l2 2M12.700 12.700l2 2M3.300 14.700l2-2M12.700 5.300l2-2M9 14v3" strokeWidth="2.200" />
      </svg>
    </Indicators>
  );
}

export default function App() {
  return (
    <Desktop>
      <GlobalStyle />
      <TitleBar>
        <WindowButtons>
          <WindowButton $close aria-label="Close window">
            <svg width="8" height="8" viewBox="0 0 8 8"><path d="M1 1l6 6M7 1L1 7" stroke="#4b2112" strokeWidth="1.600" /></svg>
          </WindowButton>
          <WindowButton aria-label="Minimize">
            <svg width="8" height="8" viewBox="0 0 8 8"><path d="M0 4h8" stroke="#33322e" strokeWidth="1.500" /></svg>
          </WindowButton>
          <WindowButton aria-label="Restore">
            <svg width="8" height="8" viewBox="0 0 8 8"><rect x="1" y="2" width="6" height="4" fill="none" stroke="#33322e" strokeWidth="1.300" /></svg>
          </WindowButton>
        </WindowButtons>
        <WindowTitle>Color wheel | Color schemes - Adobe Color CC - Mozilla Firefox</WindowTitle>
        <SystemIndicators />
      </TitleBar>

      <Workspace>
        <Launcher aria-label="Launcher">
          {launcherApps.map((app) => (
            <Tile key={app.name} $tint={app.tint} aria-label={app.name}>
              {app.left && <RunningMark />}
              {app.right && <RunningMark $right />}
              {app.icon}
            </Tile>
          ))}
          <Tile $last aria-label="Trash"><TrashIcon /></Tile>
        </Launcher>

        <Browser>
          <Chrome>
            <ThemeArt />
            <TabStrip>
              <Tab $width={215} $pad="0 0 0 24px">
                <TabTitle>Extensão Psicológica</TabTitle>
                <TabClose aria-label="Close tab"><CloseGlyph /></TabClose>
              </Tab>
              <Tab $active $width={240} $pad="0 24px 0 25px">
                <TabShape viewBox="0 0 240 30" preserveAspectRatio="none">
                  <path d="M0 29.500C10 29 12 23 14 16 16 7 19 1.500 30 1.500H206c12 0 15 6 17 14 2 8 5 14 17 14V30H0z" fill="#f8f9fc" />
                  <path d="M0 29.500C10 29 12 23 14 16 16 7 19 1.500 30 1.500H206c12 0 15 6 17 14 2 8 5 14 17 14" fill="none" stroke="#a3a8af" />
                </TabShape>
                <FaviconSlot><AdobeIcon /></FaviconSlot>
                <TabTitle $icon>Color wheel | Color sch</TabTitle>
                <TabClose aria-label="Close tab"><CloseGlyph /></TabClose>
              </Tab>
            </TabStrip>

            <NavBar>
              <svg width="16" height="14" viewBox="0 0 16 14">
                <path d="M3.500 1h9q1 0 1 1l1 8H16v3H0v-3h1.500l1-8q0-1 1-1z" fill="#4c4c4c" />
                <path d="M8 3.500v5M5.500 6h5" stroke="#fff" strokeWidth="1.200" />
              </svg>
              <BackButton aria-label="Back">
                <svg width="16" height="16" viewBox="0 0 16 16" fill="none" stroke="#a6a6a6" strokeWidth="2.800">
                  <path d="M15 8H3M8.500 1.500L2 8l6.500 6.500" />
                </svg>
              </BackButton>
              <AddressField>
                <svg width="14" height="14" viewBox="0 0 14 14">
                  <circle cx="7" cy="7" r="6.300" fill="none" stroke="#6f6f6f" />
                  <path d="M7 6v4.500M7 3.200v1.600" stroke="#5a5a5a" strokeWidth="1.700" />
                </svg>
                <svg width="20" height="14" viewBox="0 0 20 14">
                  <path d="M8 6V4a3 3 0 016 0v2" fill="none" stroke="#4d9a26" strokeWidth="2" />
                  <rect x="6" y="6" width="10" height="7" rx="1" fill="#4d9a26" />
                </svg>
                <FieldRule $gap={5} />
                <AddressInput
                  aria-label="Address"
                  defaultValue="https://color.adobe.com/create/color-wheel/?base=1&rule=Custom&selected=3&name=Extensão Psicológi"
                />
                <FieldRule $gap={6} />
                <ToolButton aria-label="Reload" type="button">
                  <svg width="12" height="13" viewBox="0 0 12 13" fill="none" stroke="#8795a5" strokeWidth="2">
                    <path d="M9.500 9.500A4.500 4.500 0 119 3.500" />
                    <path d="M11.500 0v6h-6z" fill="#8795a5" stroke="none" />
                  </svg>
                </ToolButton>
              </AddressField>
              <SearchField>
                <svg width="18" height="18" viewBox="0 0 18 18" fill="none">
                  <circle cx="6" cy="8" r="4.200" stroke="#a3a3a3" strokeWidth="1.800" />
                  <path d="M9 11l5 5" stroke="#a3a3a3" strokeWidth="2.500" />
                  <circle cx="12.500" cy="5" r="4.500" fill="#55b41e" />
                  <path d="M12.500 2.500v5M10 5h5" stroke="#fff" strokeWidth="1.400" />
                </svg>
                <SearchInput placeholder="Search" aria-label="Search" />
              </SearchField>
              <ToolButton $gap={11} aria-label="Bookmark this page">
                <svg width="17" height="17" viewBox="0 0 17 17">
                  <path d="M8.500 1.800l2 4.500 4.900.5-3.700 3.300 1.100 4.800-4.300-2.500-4.300 2.500 1.100-4.800L1.600 6.800l4.900-.5z" fill="none" stroke="#4c4c4c" strokeWidth="1.700" />
                </svg>
              </ToolButton>
              <FieldRule $gap={5} $tall={18} />
              <ToolButton aria-label="Bookmarks menu">
                <svg width="15" height="15" viewBox="0 0 15 15">
                  <path d="M5 2.500q0-2 2.500-2t2.500 2" fill="#4c4c4c" />
                  <rect x="1" y="3" width="13" height="11" rx="1" fill="none" stroke="#4c4c4c" strokeWidth="2" />
                  <path d="M3 6h2M3 8.500h2M3 11h2M6 6h6M6 8.500h6M6 11h6" stroke="#4c4c4c" strokeWidth="1.300" />
                </svg>
              </ToolButton>
              <ToolButton $gap={16} aria-label="Downloads">
                <svg width="14" height="15" viewBox="0 0 14 15"><path d="M4.500 0h5v7H14l-7 7.500L0 7h4.500z" fill="#4c4c4c" /></svg>
              </ToolButton>
              <FieldRule $gap={10} $tall={26} />
              <ToolButton aria-label="Open menu">
                <svg width="16" height="14" viewBox="0 0 16 14"><path d="M1 1.500h14M1 7h14M1 12.500h14" stroke="#4c4c4c" strokeWidth="2.600" strokeLinecap="round" /></svg>
              </ToolButton>
            </NavBar>

            <Bookmarks aria-label="Bookmarks">
              {bookmarks.map((b) => (
                <Bookmark key={b.label} href="#" $width={b.width} $gap={b.gap}>
                  {b.icon}
                  {b.label}
                </Bookmark>
              ))}
              <More aria-label="More bookmarks">»</More>
            </Bookmarks>
          </Chrome>

          <PageArea>
            <Page>
              <ColorWheel />
              <Palette aria-label="Color theme">
                {colors.map((color, i) => (
                  <ColorColumn key={color.hex} color={color} index={i} />
                ))}
              </Palette>
              <Footer>
                <FooterCell $width={213}>
                  <CloudIcon />
                  A Creative Cloud Service
                </FooterCell>
                <FooterCell $width={155}><FooterLink href="#">Create</FooterLink></FooterCell>
                <FooterCell $width={167}><FooterLink href="#">Explore</FooterLink></FooterCell>
                <FooterCell $width={117}><FooterLink href="#">My Themes</FooterLink></FooterCell>
                <FooterCell>© 2016 Adobe Systems Incorporated. All Rights Reserved.</FooterCell>
              </Footer>
            </Page>
            <ScrollTrack><ScrollThumb /></ScrollTrack>
          </PageArea>
        </Browser>
      </Workspace>
    </Desktop>
  );
}
